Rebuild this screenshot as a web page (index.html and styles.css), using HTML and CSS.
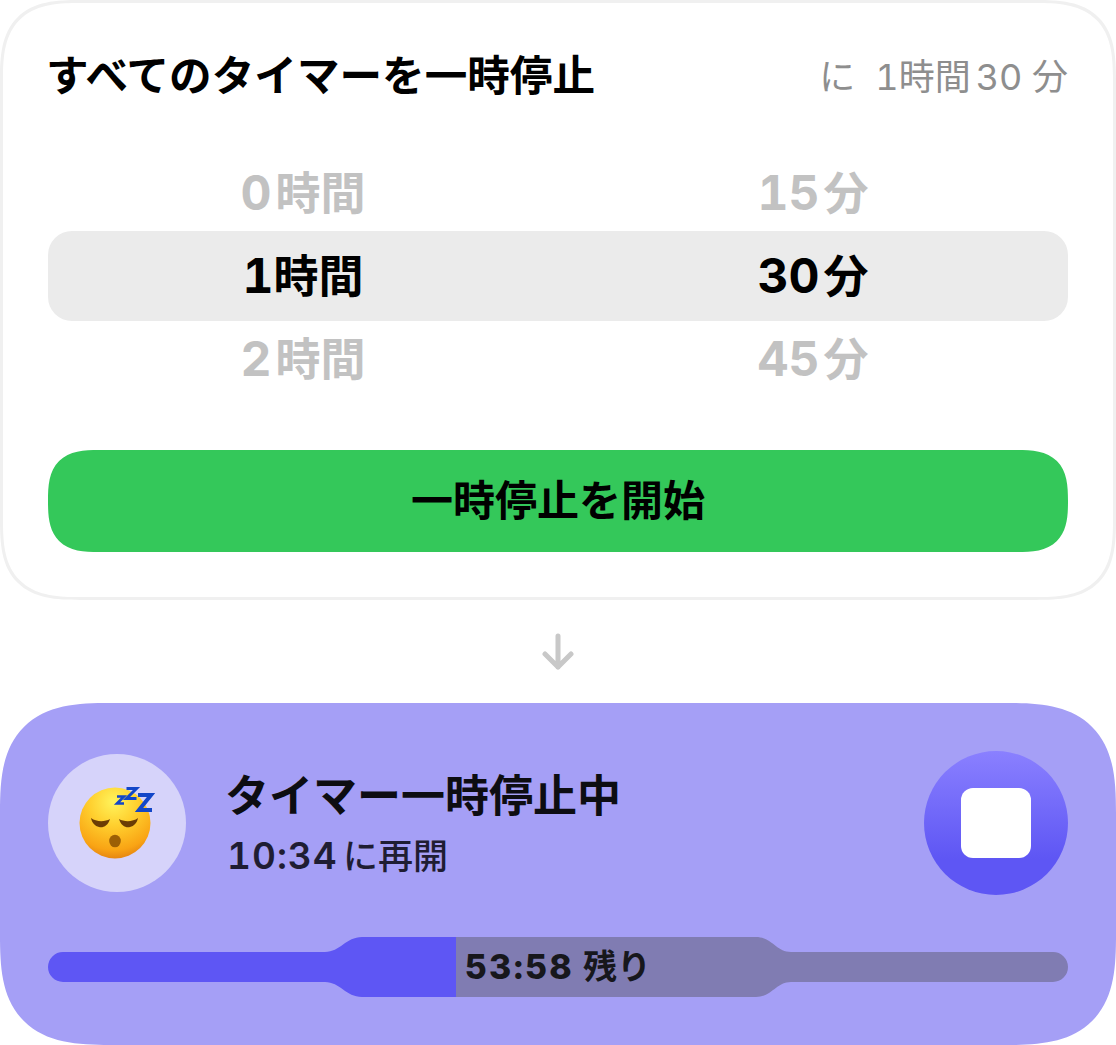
FILE: index.html
```html
<!DOCTYPE html>
<html lang="ja">
<head>
    <meta charset="UTF-8">
    <meta name="viewport" content="width=device-width, initial-scale=1.0">
    <title>タイマー一時停止</title>
    <link rel="stylesheet" href="styles.css">
</head>
<body>
    <section class="pause-card">
        <div class="pause-header">
            <h1>すべてのタイマーを一時停止</h1>
            <div class="pause-until">に<span class="gap"></span>1時間<span class="until-min">30</span> 分</div>
        </div>
        <div class="picker">
            <div class="picker-row">
                <div><span class="num">0</span> 時間</div>
                <div><span class="num">15</span> 分</div>
            </div>
            <div class="picker-row selected">
                <div><span class="num">1</span>時間</div>
                <div><span class="num">30</span> 分</div>
            </div>
            <div class="picker-row">
                <div><span class="num">2</span> 時間</div>
                <div><span class="num">45</span> 分</div>
            </div>
        </div>
        <button class="start-button">一時停止を開始</button>
    </section>

    <div class="arrow">
        <svg width="32" height="38" viewBox="0 0 32 38" fill="none" stroke="#c8c8c8" stroke-width="5" stroke-linecap="round" stroke-linejoin="round">
            <path d="M16 3V34M3 21L16 34L29 21"/>
        </svg>
    </div>

    <section class="status-card">
        <div class="status-top">
            <div class="emoji-circle">
                <svg width="76" height="76" viewBox="0 0 76 76">
                    <defs>
                        <radialGradient id="face" cx="0.48" cy="0.2" r="0.85">
                            <stop offset="0" stop-color="#fff45c"/>
                            <stop offset="0.4" stop-color="#ffcf2e"/>
                            <stop offset="0.8" stop-color="#f9a414"/>
                            <stop offset="1" stop-color="#de7a10"/>
                        </radialGradient>
                    </defs>
                    <circle cx="36" cy="38" r="35.5" fill="url(#face)"/>
                    <path d="M12 33C17 37 26 37 31 34C29 41 24 43 20 42C16 41 13 38 12 33Z" fill="#6b3c05"/>
                    <path d="M40 34C45 37 54 37 59 33C58 38 55 41 51 42C47 43 42 41 40 34Z" fill="#6b3c05"/>
                    <ellipse cx="36" cy="56" rx="5.8" ry="6.3" fill="#9c5f05"/>
                    <g fill="none" stroke="#1246c8" stroke-linejoin="miter">
                        <path d="M38 11.5H45L38 18.5H45" stroke-width="2.6"/>
                        <path d="M47.5 3.5H57.5L47.5 13.5H57.5" stroke-width="3"/>
                        <path d="M59 10H72L60 25H73" stroke-width="4"/>
                    </g>
                </svg>
            </div>
            <div class="status-text">
                <div class="status-title">タイマー一時停止中</div>
                <div class="status-sub"><span class="time">10:34</span> に再開</div>
            </div>
            <button class="stop-button"><span class="stop-icon"></span></button>
        </div>
        <div class="progress">
            <svg width="1020" height="60" viewBox="0 0 1020 60">
                <path d="M408 0H314C298 0 292 15 277 15H15A15 15 0 0 0 15 45H277C292 45 298 60 314 60H408Z" fill="#5e56f4"/>
                <path d="M408 0H708C724 0 728 15 743 15H1005A15 15 0 0 1 1005 45H743C728 45 724 60 708 60H408Z" fill="#807cb2"/>
            </svg>
            <div class="progress-label"><span class="time">53:58</span> 残り</div>
        </div>
    </section>
</body>
</html>
```

FILE: styles.css
```css
* {
    box-sizing: border-box;
}
body {
    margin: 0;
    width: 1116px;
    height: 1045px;
    overflow: hidden;
    background-color: #fff;
    color: #000;
    font-family: 'Inter', 'Noto Sans CJK JP', sans-serif;
    font-variant-numeric: tabular-nums;
}
.pause-card {
    height: 600px;
    padding: 45px 45px 0;
    border: 3px solid #f0f0f0;
    border-radius: 60px;
}
.pause-header {
    display: flex;
    justify-content: space-between;
    align-items: center;
    height: 56px;
}
h1 {
    margin: 0 0 0 -2px;
    font-size: 42.6px;
    font-weight: 700;
    line-height: 56px;
}
.pause-until {
    margin-top: -4px;
    color: #8e8e8e;
    font-size: 36px;
}
.gap {
    display: inline-block;
    width: 20px;
}
.until-min {
    margin-left: 5px;
}
.picker {
    margin-top: 51px;
}
.picker-row {
    display: grid;
    grid-template-columns: 1fr 1fr;
    align-items: center;
    height: 76px;
    color: #c2c2c2;
    font-size: 45px;
    font-weight: 700;
    line-height: 1;
    text-align: center;
    word-spacing: -8px;
}
.picker-row.selected {
    height: 90px;
    color: #000;
    background-color: #ebebeb;
    border-radius: 24px;
}
.num {
    font-size: 48px;
}
.start-button {
    display: block;
    width: 100%;
    height: 102px;
    margin-top: 53px;
    padding: 0 0 8px;
    border: none;
    border-radius: 42px;
    background-color: #34c85a;
    color: #000;
    font-family: inherit;
    font-size: 42px;
    font-weight: 700;
}
.arrow {
    display: flex;
    justify-content: center;
    align-items: center;
    height: 103px;
}
.status-card {
    height: 342px;
    padding: 48px 48px 0;
    background-color: #a59ff6;
    border-radius: 84px;
}
.status-top {
    display: flex;
    align-items: center;
    height: 144px;
}
.emoji-circle {
    display: flex;
    justify-content: center;
    align-items: center;
    flex: none;
    width: 138px;
    height: 138px;
    border-radius: 50%;
    background-color: #d6d3fa;
}
.status-text {
    flex: 1;
    margin-left: 41px;
}
.status-title {
    margin-top: -2px;
    margin-left: -2px;
    font-size: 44px;
    font-weight: 700;
    line-height: 58px;
    color: #0d0d12;
}
.status-sub {
    margin-top: 9px;
    font-size: 35px;
    font-weight: 500;
    line-height: 44px;
    color: #1f1d33;
    word-spacing: -4px;
}
.status-sub .time {
    font-size: 37px;
    font-weight: 600;
    letter-spacing: 1px;
}
.stop-button {
    display: flex;
    justify-content: center;
    align-items: center;
    flex: none;
    width: 144px;
    height: 144px;
    padding: 0;
    border: none;
    border-radius: 50%;
    background: linear-gradient(#8a80ff, #5e56f4 75%);
}
.stop-icon {
    width: 70px;
    height: 70px;
    border-radius: 12px;
    background-color: #fff;
}
.progress {
    position: relative;
    height: 60px;
    margin-top: 42px;
}
.progress svg {
    display: block;
}
.progress-label {
    position: absolute;
    left: 417px;
    top: 0;
    font-size: 34px;
    font-weight: 700;
    line-height: 60px;
    color: #17171c;
}
.progress-label .time {
    font-weight: 800;
    letter-spacing: 2.4px;
}
@supports (corner-shape: squircle) {
    .pause-card {
        border-radius: 80px;
        corner-shape: superellipse(1.5);
    }
    .start-button {
        border-radius: 56px;
        corner-shape: superellipse(1.5);
    }
    .status-card {
        border-radius: 110px;
        corner-shape: superellipse(1.5);
    }
}
```
